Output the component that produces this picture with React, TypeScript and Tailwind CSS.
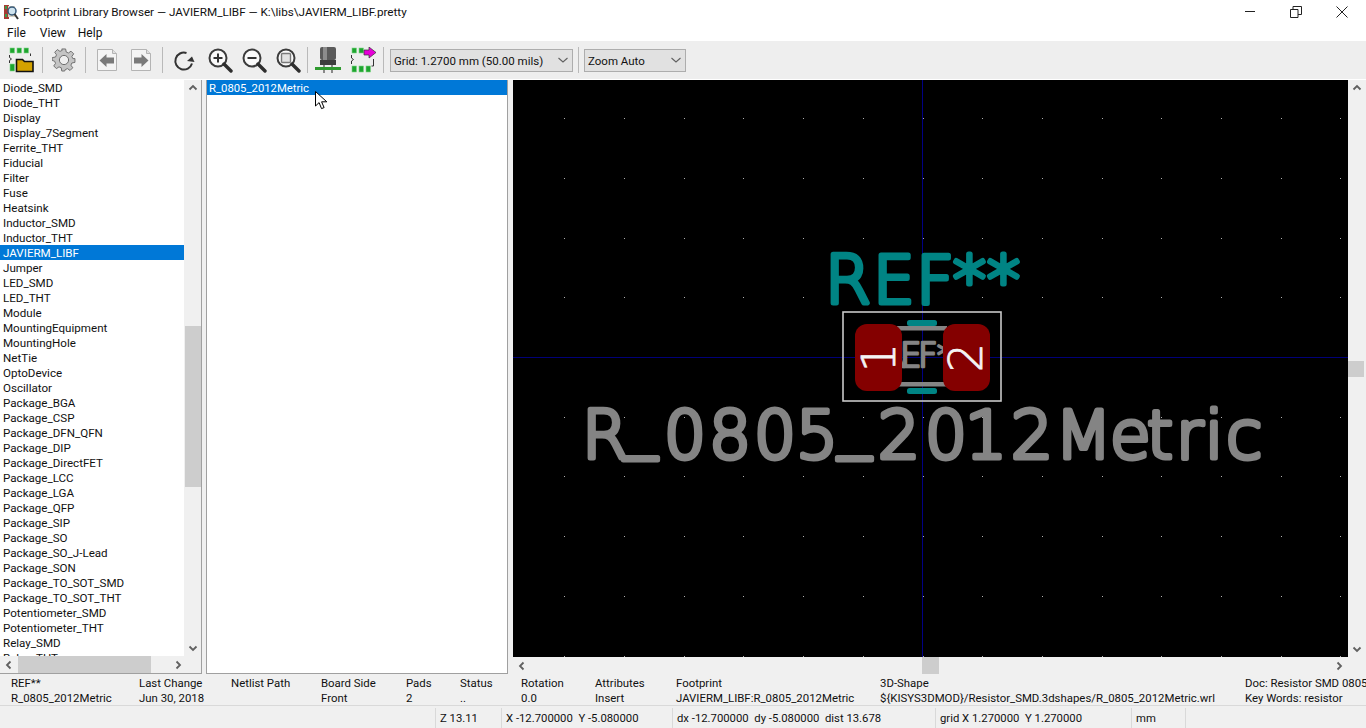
import React from "react";

const libs = ["Diode_SMD","Diode_THT","Display","Display_7Segment","Ferrite_THT","Fiducial","Filter","Fuse","Heatsink","Inductor_SMD","Inductor_THT","JAVIERM_LIBF","Jumper","LED_SMD","LED_THT","Module","MountingEquipment","MountingHole","NetTie","OptoDevice","Oscillator","Package_BGA","Package_CSP","Package_DFN_QFN","Package_DIP","Package_DirectFET","Package_LCC","Package_LGA","Package_QFP","Package_SIP","Package_SO","Package_SO_J-Lead","Package_SON","Package_TO_SOT_SMD","Package_TO_SOT_THT","Potentiometer_SMD","Potentiometer_THT","Relay_SMD","Relay_THT"];

const msg: [number, string, string][] = [
  [128, "REF**", "R_0805_2012Metric"],
  [92, "Last Change", "Jun 30, 2018"],
  [90, "Netlist Path", ""],
  [85, "Board Side", "Front"],
  [54, "Pads", "2"],
  [61, "Status", ".."],
  [74, "Rotation", "0.0"],
  [81, "Attributes", "Insert"],
  [204, "Footprint", "JAVIERM_LIBF:R_0805_2012Metric"],
  [365, "3D-Shape", "${KISYS3DMOD}/Resistor_SMD.3dshapes/R_0805_2012Metric.wrl"],
  [121, "Doc: Resistor SMD 0805", "Key Words: resistor"],
];

const Chev = ({ d }: { d: "u" | "d" | "l" | "r" }) => {
  const p = { u: "M1.5 6.5 5 3l3.5 3.5", d: "M1.5 3.5 5 7l3.5-3.5", l: "M6.5 1.5 3 5l3.5 3.5", r: "M3.5 1.5 7 5 3.5 8.5" }[d];
  return <svg width="10" height="10" viewBox="0 0 10 10"><path d={p} fill="none" stroke="#606060" strokeWidth="1.8" /></svg>;
};

const Chip = ({ children }: { children?: React.ReactNode }) => (
  <svg width="26" height="26" viewBox="0 0 26 26">{children}</svg>
);

const Arrow = ({ dir }: { dir: "l" | "r" }) => (
  <svg width="22" height="24" viewBox="0 0 22 24">
    <path d="M1.5 1.5H16.5L20.5 5.5V22.5H1.5Z" fill="#f4f4f4" stroke="#b4b4b4" />
    <path d="M16.5 1.5V5.5H20.5" fill="#e0e0e0" stroke="#b4b4b4" />
    {dir === "l" ? <path d="M3.5 12.5 10.5 6V9.5H18V15.5H10.5V19Z" fill="#7a7a7a" /> : <path d="M18.5 12.5 11.5 6V9.5H4V15.5H11.5V19Z" fill="#7a7a7a" />}
  </svg>
);

const Magnifier = ({ children }: { children?: React.ReactNode }) => (
  <svg width="26" height="26" viewBox="0 0 26 26">
    <circle cx="11" cy="11" r="8.5" fill="#fafafa" stroke="#3c3c3c" strokeWidth="2" />
    <path d="M17 17 24 24" stroke="#2e2e2e" strokeWidth="3.4" strokeLinecap="round" />
    {children}
  </svg>
);

const Tool = ({ className = "", children }: { className?: string; children: React.ReactNode }) => (
  <div className={`flex h-full w-[34px] shrink-0 items-center justify-center ${className}`}>{children}</div>
);

const Divider = ({ className = "" }: { className?: string }) => (
  <div className={`h-[26px] w-px shrink-0 bg-[#b9b9b9] ${className}`} />
);

const Combo = ({ label, className }: { label: string; className: string }) => (
  <div className={`flex h-[23px] shrink-0 items-center justify-between border border-[#adadad] bg-[#e1e1e1] pl-[3px] pr-[3px] text-[11.5px] ${className}`}>
    <span className="pt-[2px]">{label}</span>
    <svg width="12" height="12" viewBox="0 0 12 12"><path d="M1.5 4 6 8l4.5-4" fill="none" stroke="#606060" strokeWidth="1.1" /></svg>
  </div>
);

const GX = Array.from({ length: 15 }, (_, i) => 922.5 + (i - 7) * 59.7);
const GY = Array.from({ length: 11 }, (_, i) => 357 + (i - 5) * 59.7);

const FONT = "'DejaVu Sans', sans-serif";

const Board = () => (
  <svg className="block h-full w-full" viewBox="513 80 835 577">
    {GX.map((x) => GY.map((y) => <rect key={`${x}-${y}`} x={Math.round(x)} y={Math.round(y)} width="1" height="1" fill="#b0b0b0" />))}
    <rect x="513" y="357" width="835" height="1" fill="#000078" />
    <rect x="922" y="80" width="1" height="577" fill="#000084" />
    <text x="825 873 916 953 987" y="303" fontFamily={FONT} fontWeight="200" fontSize="66" fill="#008484" stroke="#008484" strokeWidth="5" strokeLinejoin="round">REF**</text>
    <text
      x="582 624 664 709 754 796 838 878 925 965 1011 1055 1110 1147 1176 1205 1226"
      y="458"
      dy="0 -14 14 0 0 0 -14 14 0 0 0 0 0 0 0 0 0"
      fontFamily={FONT}
      fontWeight="200"
      fontSize="66"
      fill="#848484"
      stroke="#848484"
      strokeWidth="5"
      strokeLinejoin="round"
    >
      R_0805_2012Metric
    </text>
    <text x="882 900 918 937 955" y="367" fontFamily={FONT} fontWeight="200" fontSize="34" fill="#848484" stroke="#848484" strokeWidth="2.6" strokeLinejoin="round">REF**</text>
    <rect x="897" y="326" width="50" height="4.5" fill="#848484" />
    <rect x="897" y="382" width="50" height="4.5" fill="#848484" />
    <rect x="907" y="320" width="30" height="6" rx="2.5" fill="#008484" />
    <rect x="907" y="388" width="30" height="6" rx="2.5" fill="#008484" />
    <rect x="855" y="324" width="47" height="67" rx="12" fill="#840000" />
    <rect x="943" y="324" width="47" height="67" rx="12" fill="#840000" />
    <text transform="translate(895 357.5) rotate(-90)" x="0" y="0" textAnchor="middle" fontFamily={FONT} fontWeight="200" fontSize="46" fill="#f4f4f4" stroke="#f4f4f4" strokeWidth=".8">1</text>
    <text transform="translate(982 357.5) rotate(-90)" x="0" y="0" textAnchor="middle" fontFamily={FONT} fontWeight="200" fontSize="46" fill="#f4f4f4" stroke="#f4f4f4" strokeWidth=".8">2</text>
    <rect x="843" y="312" width="158" height="89" fill="none" stroke="#c8c8c8" strokeWidth="1.6" />
  </svg>
);

export default function App() {
  return (
    <div className="relative flex h-[728px] w-[1366px] flex-col overflow-hidden bg-[#f0f0f0] font-['Roboto',sans-serif] text-[12px] leading-[15px] text-[#111]">
      {/* Title bar */}
      <div className="flex h-[24px] shrink-0 items-center bg-white">
        <svg className="ml-[4px]" width="15" height="16" viewBox="0 0 15 16">
          <rect x="0" y="1" width="5" height="14" fill="#a83a32" />
          <rect x="1" y="2" width="2" height="3" fill="#3c9a48" />
          <rect x="1" y="10" width="2" height="3" fill="#3c9a48" />
          <rect x="4" y="2" width="7" height="11" fill="#d8d0c0" />
          <circle cx="8" cy="7" r="4" fill="#cfe3ee" stroke="#375a7a" strokeWidth="1.5" />
          <path d="M10.5 10 14 15" stroke="#333" strokeWidth="2" />
        </svg>
        <span className="ml-[4px] whitespace-nowrap text-[11.7px]">Footprint Library Browser — JAVIERM_LIBF — K:\libs\JAVIERM_LIBF.pretty</span>
        <div className="ml-auto flex items-center">
          <svg width="12" height="12" viewBox="0 0 12 12" className="mr-[34px]"><path d="M1 5.5H11" stroke="#222" /></svg>
          <svg width="12" height="12" viewBox="0 0 12 12" className="mr-[34px]"><path d="M.5 3.5h7.5v8H.5zM3 3.5V.5h8.5v8h-3.5" fill="none" stroke="#222" /></svg>
          <svg width="12" height="12" viewBox="0 0 12 12" className="mr-[18px]"><path d="M.5.5l11 11M11.5.5l-11 11" stroke="#222" /></svg>
        </div>
      </div>
      {/* Menu */}
      <div className="flex h-[17px] shrink-0 items-center bg-white pl-[7px] pt-px">
        <span>File</span>
        <span className="ml-[14px]">View</span>
        <span className="ml-[12px]">Help</span>
      </div>
      {/* Toolbar */}
      <div className="flex h-[38px] shrink-0 items-center bg-[#eeeeee] pl-[4px]">
        <Tool>
          <Chip>
            <g fill="#1ea52f" stroke="#7fd487" strokeWidth=".6">
              <rect x="2" y="1" width="4.5" height="5" /><rect x="9" y="1" width="4.5" height="5" /><rect x="16" y="1" width="4.5" height="5" />
              <rect x="2" y="17" width="4.5" height="7" />
            </g>
            <path d="M1.5 8v2.5l2 1.5-2 1.5V16" fill="none" stroke="#333" />
            <path d="M22.5 6.5V9" stroke="#333" />
            <path d="M8.5 12.5h6l2 2h8.5v10H8.5z" fill="#d3a200" stroke="#111" strokeWidth="1.6" />
          </Chip>
        </Tool>
        <Divider className="ml-[4px]" />
        <Tool className="ml-[4px]">
          <svg width="24" height="24" viewBox="0 0 24 24">
            <path d="M10 1h4l.6 3.2 2.3 1 2.7-1.9 2.8 2.8-1.9 2.7 1 2.3L23.7 11v4l-3.2.6-1 2.3 1.9 2.7-2.8 2.8-2.7-1.9-2.3 1L13 24h-3l-.6-3.4-2.3-1-2.7 1.9-2.8-2.8 1.9-2.7-1-2.3L0 13v-3l3.5-.6 1-2.3L2.6 4.4l2.8-2.8 2.7 1.9 2.3-1z" transform="scale(.96) translate(.2 0)" fill="#c4c4c4" stroke="#6e6e6e" />
            <circle cx="12" cy="12" r="4.6" fill="#efefef" stroke="#6e6e6e" />
          </svg>
        </Tool>
        <Divider className="ml-[4px]" />
        <Tool className="ml-[4px]"><Arrow dir="l" /></Tool>
        <Tool><Arrow dir="r" /></Tool>
        <Divider className="ml-[4px]" />
        <Tool className="ml-[4px]">
          <svg width="24" height="24" viewBox="0 0 24 24">
            <path d="M20 15.5A8.5 8.5 0 1 1 14.5 5" fill="none" stroke="#333" strokeWidth="2" />
            <path d="M16 16l5-4.5 2.5 5.5z" fill="#333" transform="translate(-1 -3)" />
          </svg>
        </Tool>
        <Tool className="ml-[2px]"><Magnifier><path d="M6.5 11h9M11 6.5v9" stroke="#333" strokeWidth="2" /></Magnifier></Tool>
        <Tool><Magnifier><path d="M6.5 11h9" stroke="#333" strokeWidth="2" /></Magnifier></Tool>
        <Tool><Magnifier><rect x="6.5" y="6.5" width="9" height="9" rx="1" fill="#e2e2e2" stroke="#7a7a7a" strokeWidth="1.4" /></Magnifier></Tool>
        <Divider className="ml-[2px]" />
        <Tool className="ml-[3px]">
          <svg width="26" height="26" viewBox="0 0 26 26">
            <rect x="5" y="0" width="16" height="13" rx="2" fill="#5a5a5a" />
            <rect x="8" y="0" width="4" height="13" fill="#8c8c8c" />
            <rect x="5" y="13" width="16" height="5" fill="#3e3e3e" />
            <path d="M9 18v8M17 18v8" stroke="#555" strokeWidth="1.3" />
            <rect x="0" y="20" width="26" height="3" fill="#2f9a2f" />
          </svg>
        </Tool>
        <Tool className="ml-px">
          <svg width="26" height="26" viewBox="0 0 26 26">
            <g fill="#1ea52f" stroke="#7fd487" strokeWidth=".6">
              <rect x="2" y="1" width="4.5" height="5" /><rect x="9" y="1" width="4.5" height="5" />
              <rect x="2" y="19" width="4.5" height="6" /><rect x="9" y="19" width="4.5" height="6" /><rect x="16" y="19" width="4.5" height="6" />
            </g>
            <path d="M1.5 8v3l2 1.5-2 1.5v3M23.5 12v7h-2" fill="none" stroke="#333" />
            <path d="M14 3h5V0l7 5.5-7 5.5V8h-5z" fill="#e600d8" stroke="#333" strokeWidth=".7" />
          </svg>
        </Tool>
        <Divider className="ml-[3px]" />
        <Combo label="Grid: 1.2700 mm (50.00 mils)" className="ml-[6px] w-[183px]" />
        <Divider className="ml-[5px]" />
        <Combo label="Zoom Auto" className="ml-[5px] w-[102px]" />
      </div>
      <div className="h-px shrink-0 bg-white" />
      {/* Main */}
      <div className="flex h-[594px] shrink-0">
        {/* library list */}
        <div className="flex h-full w-[202px] shrink-0 flex-col border-b border-r border-[#a0a0a0]">
          <div className="flex min-h-0 flex-1">
            <div className="w-[184px] overflow-hidden bg-white text-[11.6px] leading-[17px]">
              {libs.map((l) => (
                <div key={l} className={l === "JAVIERM_LIBF" ? "h-[15px] whitespace-nowrap bg-[#0078d7] pl-[3px] text-white" : "h-[15px] whitespace-nowrap pl-[3px]"}>{l}</div>
              ))}
            </div>
            <div className="flex w-[17px] flex-col items-center justify-between bg-[#f0f0f0] py-[3px]">
              <Chev d="u" />
              <Chev d="d" />
              <div className="absolute left-[185px] top-[326px] h-[161px] w-[16px] bg-[#cdcdcd]" />
            </div>
          </div>
          <div className="relative flex h-[17px] shrink-0 items-center justify-between bg-[#f0f0f0] px-[4px]">
            <Chev d="l" />
            <div className="absolute left-[18px] top-0 h-[17px] w-[133px] bg-[#cdcdcd]" />
            <div className="mr-[14px]"><Chev d="r" /></div>
          </div>
        </div>
        {/* footprint list */}
        <div className="ml-[4px] h-full w-[302px] shrink-0 border-x border-b border-[#a0a0a0] bg-white">
          <div className="h-[15px] bg-[#0078d7] pl-[2px] text-[11.3px] leading-[17px] text-white">R_0805_2012Metric</div>
        </div>
        {/* canvas */}
        <div className="ml-[5px] flex h-full min-w-0 flex-1 flex-col">
          <div className="flex h-[577px] shrink-0">
            <div className="h-full w-[835px] shrink-0 bg-black"><Board /></div>
            <div className="relative flex flex-1 flex-col items-center justify-between py-[3px]">
              <Chev d="u" />
              <div className="absolute left-0 top-[281px] h-[16px] w-[16px] bg-[#cdcdcd]" />
              <Chev d="d" />
            </div>
          </div>
          <div className="relative flex h-[17px] shrink-0 items-center justify-between pl-[4px] pr-[22px]">
            <Chev d="l" />
            <div className="absolute left-[409px] top-0 h-[17px] w-[17px] bg-[#cdcdcd]" />
            <Chev d="r" />
          </div>
        </div>
      </div>
      {/* message panel */}
      <div className="flex h-[32px] shrink-0 overflow-hidden border-b border-[#d9d9d9] pl-[11px] pt-[2px] text-[11.4px]">
        {msg.map(([w, a, b]) => (
          <div key={a} style={{ width: w }} className="shrink-0 whitespace-nowrap">
            <div>{a}</div>
            <div>{b}</div>
          </div>
        ))}
      </div>
      {/* status bar */}
      <div className="flex h-[23px] shrink-0 items-center whitespace-pre text-[11.3px]">
        <div className="h-[20px] w-[435px] shrink-0" />
        <div className="h-[20px] w-[67px] shrink-0 border-x border-[#d9d9d9] pl-[4px] leading-[22px]">Z 13.11</div>
        <div className="h-[20px] w-[171px] shrink-0 border-r border-[#d9d9d9] pl-[4px] leading-[22px]">X -12.700000  Y -5.080000</div>
        <div className="h-[20px] w-[263px] shrink-0 border-r border-[#d9d9d9] pl-[4px] leading-[22px]">dx -12.700000  dy -5.080000  dist 13.678</div>
        <div className="h-[20px] w-[196px] shrink-0 border-r border-[#d9d9d9] pl-[4px] leading-[22px]">grid X 1.270000  Y 1.270000</div>
        <div className="h-[20px] w-[54px] shrink-0 border-r border-[#d9d9d9] pl-[4px] leading-[22px]">mm</div>
      </div>
      {/* mouse cursor */}
      <svg className="absolute left-[315px] top-[91px]" width="14" height="20" viewBox="0 0 14 20">
        <path d="M.5.5V15l3.6-3.4 2.4 6 2.6-1-2.5-5.8h5.2z" fill="#fff" stroke="#000" />
      </svg>
    </div>
  );
}
